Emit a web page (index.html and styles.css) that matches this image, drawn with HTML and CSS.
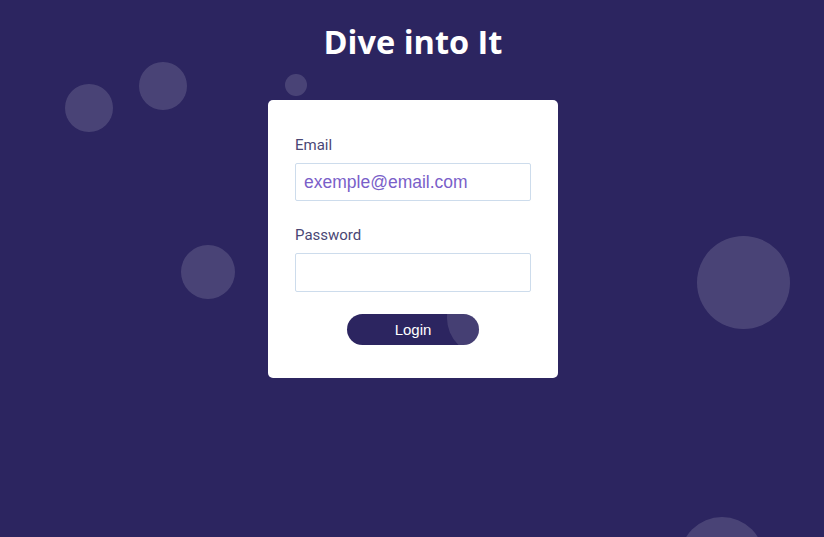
FILE: index.html
```html
<!DOCTYPE html>
<html lang="en">
<head>
<meta charset="utf-8">
<title>Dive into It</title>
<link rel="stylesheet" href="styles.css">
</head>
<body>
<div class="bubbles">
  <span class="bubble b1"></span>
  <span class="bubble b2"></span>
  <span class="bubble b3"></span>
  <span class="bubble b4"></span>
  <span class="bubble b5"></span>
  <span class="bubble b6"></span>
</div>
<main class="page">
  <h1 class="title">Dive into It</h1>
  <form class="card">
    <label class="label" for="email">Email</label>
    <input class="field" id="email" type="email" placeholder="exemple@email.com">
    <label class="label label-gap" for="password">Password</label>
    <input class="field" id="password" type="password">
    <div class="actions">
      <button class="btn" type="button"><span class="btn-bubble"></span><span class="btn-text">Login</span></button>
    </div>
  </form>
</main>
</body>
</html>
```
FILE: styles.css
```css
html, body {
  margin: 0;
  padding: 0;
  height: 100%;
  overflow: hidden;
}
body {
  background: #2c2560;
  font-family: Roboto, "Liberation Sans", sans-serif;
  position: relative;
}
.bubbles {
  position: absolute;
  inset: 0;
  overflow: hidden;
  pointer-events: none;
}
.bubble {
  position: absolute;
  border-radius: 50%;
  background: rgba(255, 255, 255, 0.14);
}
.b1 { left: 65px; top: 84px; width: 48px; height: 48px; }
.b2 { left: 139px; top: 62px; width: 48px; height: 48px; }
.b3 { left: 285px; top: 74px; width: 22px; height: 22px; }
.b4 { left: 181px; top: 245px; width: 54px; height: 54px; }
.b5 { left: 697px; top: 236px; width: 93px; height: 93px; }
.b6 { left: 680px; top: 517px; width: 84px; height: 84px; }

.page {
  position: relative;
  display: flex;
  flex-direction: column;
  align-items: center;
  padding-left: 2px;
}
.title {
  margin: 21px 0 0;
  height: 79px;
  color: #ffffff;
  font-family: "Open Sans", "Noto Sans", sans-serif;
  font-size: 32.5px;
  font-weight: 700;
  line-height: 42px;
}
.card {
  width: 236px;
  background: #ffffff;
  border-radius: 5px;
  padding: 35px 27px 33px;
  display: flex;
  flex-direction: column;
}
.label {
  color: #4a4775;
  font-size: 15px;
  line-height: 20px;
  margin-bottom: 8px;
}
.label-gap {
  margin-top: 24px;
}
.field {
  box-sizing: border-box;
  width: 236px;
  height: 38px;
  margin: 0;
  border: 1px solid #cddcec;
  border-radius: 2px;
  padding: 0 8px;
  font-family: "Liberation Sans", Arial, sans-serif;
  font-size: 17.5px;
  color: #2c2560;
  outline: none;
}
#password { height: 39px; }
.field::placeholder {
  color: #7a5fc9;
  opacity: 1;
}
.actions {
  display: flex;
  justify-content: center;
  margin-top: 22px;
}
.btn {
  position: relative;
  overflow: hidden;
  width: 132px;
  height: 31px;
  border: none;
  border-radius: 16px;
  background: #2c2560;
  color: #ffffff;
  font-family: "Liberation Sans", Arial, sans-serif;
  font-size: 15px;
  line-height: 28px;
  padding: 0;
  cursor: pointer;
}
.btn-bubble {
  position: absolute;
  left: 100px;
  top: -33px;
  width: 74px;
  height: 74px;
  border-radius: 50%;
  background: rgba(255, 255, 255, 0.12);
}
.btn-text {
  position: relative;
}
```
